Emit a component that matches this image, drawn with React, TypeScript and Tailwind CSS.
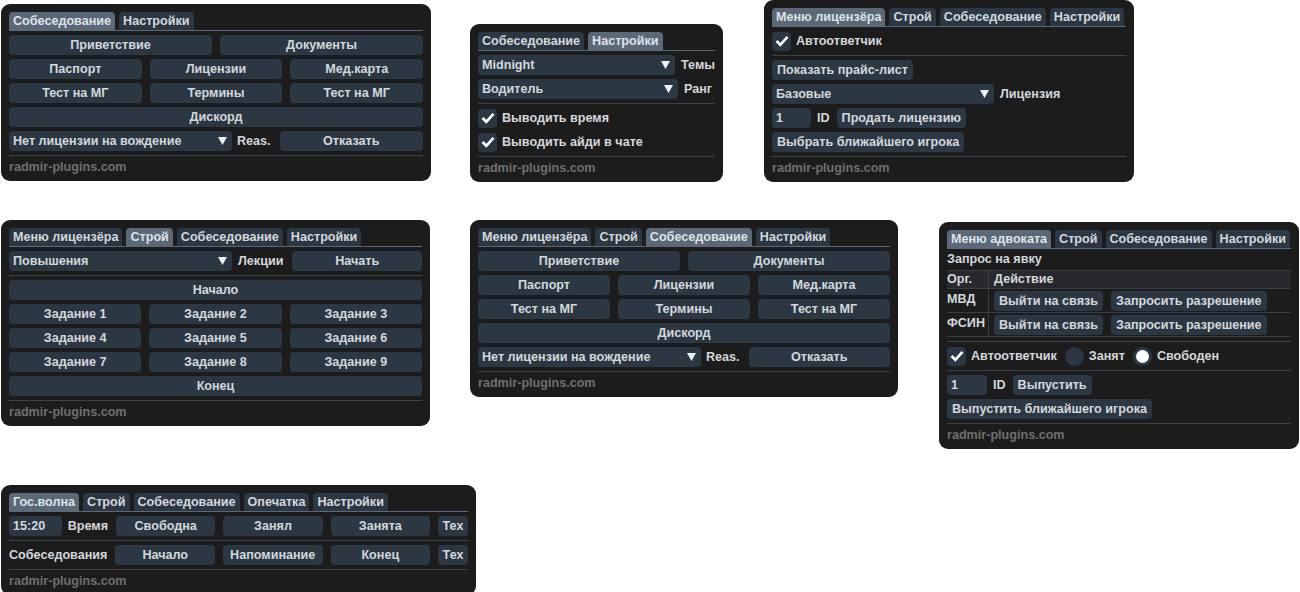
import React from "react";

// imgui-like windows from the radmir helper

function Tabs({ items, active }: { items: string[]; active: number }) {
  return (
    <div>
      <div className="flex items-end gap-[4px]">
        {items.map((t, i) => (
          <div
            key={t}
            className={`h-[18px] px-[4px] rounded-t-[4px] leading-[18px] whitespace-nowrap ${
              i === active ? "bg-[#5a6877] text-[#dde2e6]" : "bg-[#2b3743]"
            }`}
          >
            {t}
          </div>
        ))}
      </div>
      <div className="h-px bg-[#5a6877]" />
    </div>
  );
}

function Sep() {
  return <div className="h-px bg-[#3e4147]" />;
}

interface WinProps {
  tabs: string[];
  active: number;
  className?: string;
  children: React.ReactNode;
}

function Win({ tabs, active, className = "", children }: WinProps) {
  return (
    <div
      className={`shrink-0 rounded-[9px] bg-[#1c1c1c] px-[8px] pt-[8px] pb-[6px] flex flex-col text-[12.6px] font-bold text-[#d3d7db] ${className}`}
    >
      <Tabs items={tabs} active={active} />
      <div className="mt-[4px] flex flex-col gap-[4px]">
        {children}
        <Sep />
        <div className="text-[#6f6f6f] leading-[15px]">radmir-plugins.com</div>
      </div>
    </div>
  );
}

function Btn({ children, className = "" }: { children: React.ReactNode; className?: string }) {
  return (
    <div
      className={`h-[20px] rounded-[4px] bg-[#2b3743] flex items-center justify-center px-[5px] whitespace-nowrap leading-none ${className}`}
    >
      {children}
    </div>
  );
}

function Input({ value, className = "" }: { value: string; className?: string }) {
  return (
    <div className={`h-[20px] rounded-[4px] bg-[#2b3743] flex items-center pl-[4px] leading-none ${className}`}>
      {value}
    </div>
  );
}

function Combo({ value, className = "" }: { value: string; className?: string }) {
  return (
    <div
      className={`h-[20px] rounded-[4px] bg-[#2b3743] flex items-center justify-between pl-[4px] pr-[5px] leading-none whitespace-nowrap ${className}`}
    >
      <span>{value}</span>
      <svg width="9" height="8" viewBox="0 0 9 8">
        <path d="M0 0H9L4.5 8Z" fill="#eef1f3" />
      </svg>
    </div>
  );
}

function Check({ label }: { label: string }) {
  return (
    <div className="flex items-center gap-[5px] h-[20px]">
      <div className="w-[19px] h-[19px] rounded-[4px] bg-[#2b3743] flex items-center justify-center">
        <svg width="14" height="12" viewBox="0 0 14 12">
          <path d="M1.5 6L5.3 9.8L12.5 1.8" stroke="#ffffff" strokeWidth="2.7" fill="none" />
        </svg>
      </div>
      <span className="whitespace-nowrap">{label}</span>
    </div>
  );
}

function Radio({ label, on }: { label: string; on?: boolean }) {
  return (
    <div className="flex items-center gap-[5px] h-[20px]">
      <div className="w-[19px] h-[19px] rounded-full bg-[#2b3743] flex items-center justify-center">
        {on && <div className="w-[13px] h-[13px] rounded-full bg-white" />}
      </div>
      <span className="whitespace-nowrap">{label}</span>
    </div>
  );
}

function Interview() {
  return (
    <>
      <div className="flex gap-[8px]">
        <Btn className="flex-1">Приветствие</Btn>
        <Btn className="flex-1">Документы</Btn>
      </div>
      <div className="grid grid-cols-3 gap-x-[8px]">
        <Btn>Паспорт</Btn>
        <Btn>Лицензии</Btn>
        <Btn>Мед.карта</Btn>
      </div>
      <div className="grid grid-cols-3 gap-x-[8px]">
        <Btn>Тест на МГ</Btn>
        <Btn>Термины</Btn>
        <Btn>Тест на МГ</Btn>
      </div>
      <Btn>Дискорд</Btn>
      <div className="flex items-center">
        <Combo value="Нет лицензии на вождение" className="w-[223px]" />
        <span className="ml-[5px]">Reas.</span>
        <Btn className="flex-1 ml-[9px]">Отказать</Btn>
      </div>
    </>
  );
}

const lic = ["Меню лицензёра", "Строй", "Собеседование", "Настройки"];

export default function App() {
  return (
    <div className="w-[1300px] h-[592px] overflow-hidden bg-white font-['Liberation_Sans',Arial,sans-serif]">
      <div className="flex items-start h-[220px]">
        <Win tabs={["Собеседование", "Настройки"]} active={0} className="ml-[1px] mt-[4px] w-[430px]">
          <Interview />
        </Win>

        <Win tabs={["Собеседование", "Настройки"]} active={1} className="ml-[39px] mt-[24px] w-[253px]">
          <div className="flex items-center">
            <Combo value="Midnight" className="w-[200px]" />
            <span className="ml-[6px]">Темы</span>
          </div>
          <div className="flex items-center">
            <Combo value="Водитель" className="w-[200px]" />
            <span className="ml-[6px]">Ранг</span>
          </div>
          <Sep />
          <Check label="Выводить время" />
          <Check label="Выводить айди в чате" />
        </Win>

        <Win tabs={lic} active={0} className="ml-[41px] w-[370px]">
          <Check label="Автоответчик" />
          <Sep />
          <Btn className="self-start">Показать прайс-лист</Btn>
          <div className="flex items-center">
            <Combo value="Базовые" className="w-[222px]" />
            <span className="ml-[6px]">Лицензия</span>
          </div>
          <div className="flex items-center">
            <Input value="1" className="w-[39px]" />
            <span className="ml-[6px]">ID</span>
            <Btn className="ml-[7px]">Продать лицензию</Btn>
          </div>
          <Btn className="self-start">Выбрать ближайшего игрока</Btn>
        </Win>
      </div>

      <div className="flex items-start h-[265px]">
        <Win tabs={lic} active={1} className="ml-[1px] w-[429px]">
          <div className="flex items-center">
            <Combo value="Повышения" className="w-[223px]" />
            <span className="ml-[6px]">Лекции</span>
            <Btn className="flex-1 ml-[9px]">Начать</Btn>
          </div>
          <Sep />
          <Btn>Начало</Btn>
          <div className="grid grid-cols-3 gap-x-[8px] gap-y-[4px]">
            {[1, 2, 3, 4, 5, 6, 7, 8, 9].map((n) => (
              <Btn key={n}>Задание {n}</Btn>
            ))}
          </div>
          <Btn>Конец</Btn>
        </Win>

        <Win tabs={lic} active={2} className="ml-[40px] w-[428px]">
          <Interview />
        </Win>

        <Win
          tabs={["Меню адвоката", "Строй", "Собеседование", "Настройки"]}
          active={0}
          className="ml-[41px] mt-[2px] w-[360px]"
        >
          <div className="leading-[13px]">Запрос на явку</div>
          <div className="border-t border-[#3a3d42]">
            <div className="flex h-[18px] bg-[#28292c] border-b border-[#3a3d42] items-center">
              <div className="w-[42px] h-full border-r border-[#3a3d42] flex items-center">Орг.</div>
              <div className="pl-[5px]">Действие</div>
            </div>
            {["МВД", "ФСИН"].map((o) => (
              <div key={o} className="flex h-[24px] border-b border-[#3a3d42]">
                <div className="w-[42px] border-r border-[#3a3d42] pt-[2px] leading-[16px]">{o}</div>
                <div className="flex gap-[8px] pl-[5px] pt-[2px]">
                  <Btn>Выйти на связь</Btn>
                  <Btn>Запросить разрешение</Btn>
                </div>
              </div>
            ))}
          </div>
          <Sep />
          <div className="flex items-center gap-[8px]">
            <Check label="Автоответчик" />
            <Radio label="Занят" />
            <Radio label="Свободен" on />
          </div>
          <Sep />
          <div className="flex items-center">
            <Input value="1" className="w-[40px]" />
            <span className="ml-[6px]">ID</span>
            <Btn className="ml-[7px]">Выпустить</Btn>
          </div>
          <Btn className="self-start">Выпустить ближайшего игрока</Btn>
        </Win>
      </div>

      <div className="flex items-start">
        <Win
          tabs={["Гос.волна", "Строй", "Собеседование", "Опечатка", "Настройки"]}
          active={0}
          className="ml-[1px] w-[475px]"
        >
          <div className="flex items-center gap-[8px]">
            <div className="w-[99px] flex items-center">
              <Input value="15:20" className="w-[54px]" />
              <span className="ml-[6px]">Время</span>
            </div>
            <Btn className="w-[100px]">Свободна</Btn>
            <Btn className="w-[100px]">Занял</Btn>
            <Btn className="w-[100px]">Занята</Btn>
            <Btn className="w-[30px] px-0">Тех</Btn>
          </div>
          <Sep />
          <div className="flex items-center gap-[8px]">
            <div className="w-[99px] whitespace-nowrap">Собеседования</div>
            <Btn className="w-[100px]">Начало</Btn>
            <Btn className="w-[100px]">Напоминание</Btn>
            <Btn className="w-[100px]">Конец</Btn>
            <Btn className="w-[30px] px-0">Тех</Btn>
          </div>
        </Win>
      </div>
    </div>
  );
}
